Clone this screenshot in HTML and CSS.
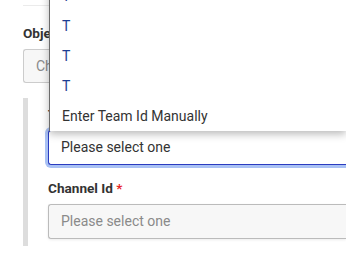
FILE: index.html
```html
<!DOCTYPE html>
<html lang="en">

<head>
  <meta charset="UTF-8">
  <meta name="viewport" content="width=device-width, initial-scale=1.0">
  <link rel="stylesheet" href="styles.css">
  <title>Team settings</title>
</head>

<body>
  <main class="form">
    <hr class="rule">

    <label class="label">Object Type</label>
    <div class="input placeholder">Choose a type</div>

    <section class="group">
      <label class="label">Team Id <span class="req">*</span></label>
      <div class="select is-focused">Please select one</div>

      <label class="label">Channel Id <span class="req">*</span></label>
      <div class="select placeholder">Please select one</div>
    </section>
  </main>

  <ul class="menu">
    <li class="menu-item team">T</li>
    <li class="menu-item team">T</li>
    <li class="menu-item team">T</li>
    <li class="menu-item team">T</li>
    <li class="menu-item team">T</li>
    <li class="menu-item">Enter Team Id Manually</li>
  </ul>
</body>

</html>
```

FILE: styles.css
```css
body {
  margin: 0;
  font-family: Roboto, "Liberation Sans", Arial, sans-serif;
  color: #333;
  background: #fff;
  overflow: hidden;
}

.form {
  display: flex;
  flex-direction: column;
  padding: 5px 0 0 23px;
}

.rule {
  margin: 0;
  border: 0;
  border-top: 1px solid #ebebeb;
}

.label {
  display: block;
  margin-top: 18px;
  margin-bottom: 7px;
  font-size: 13.6px;
  font-weight: 700;
  line-height: 18px;
  color: #333;
}

.req {
  color: #e8262a;
}

.input,
.select {
  box-sizing: border-box;
  height: 34px;
  padding: 0 12px;
  border: 1px solid #ccc;
  border-radius: 3px;
  border-right: 0;
  border-top-right-radius: 0;
  border-bottom-right-radius: 0;
  font-size: 14px;
  line-height: 32px;
  background: #f7f7f7;
}

.placeholder {
  color: #8a8a8a;
}

.group {
  margin-top: 15px;
  padding: 7px 0 7px 20px;
  border-left: 5px solid #ddd;
}

.group .label:first-child {
  margin-top: 0;
}

.group .label {
  margin-top: 14px;
}

.select {
  height: 35px;
  line-height: 33px;
  border-color: #bbb;
  box-shadow: 0 1px 3px rgba(0, 0, 0, 0.08);
}

.select.is-focused {
  background: #fff;
  color: #333;
  border-color: #2b3cc0;
  box-shadow: 0 0 0 3px #a9c1f4;
}

.menu {
  position: absolute;
  top: -49px;
  left: 49px;
  right: 0;
  margin: 0;
  padding: 0;
  list-style: none;
  background: #fff;
  border-left: 1px solid #6b6b6b;
  box-shadow: 0 3px 8px rgba(0, 0, 0, 0.28);
}

.menu-item {
  height: 30px;
  padding-left: 12px;
  font-size: 14px;
  line-height: 30px;
  color: #333;
}

.team {
  color: #1d3d92;
}
```
